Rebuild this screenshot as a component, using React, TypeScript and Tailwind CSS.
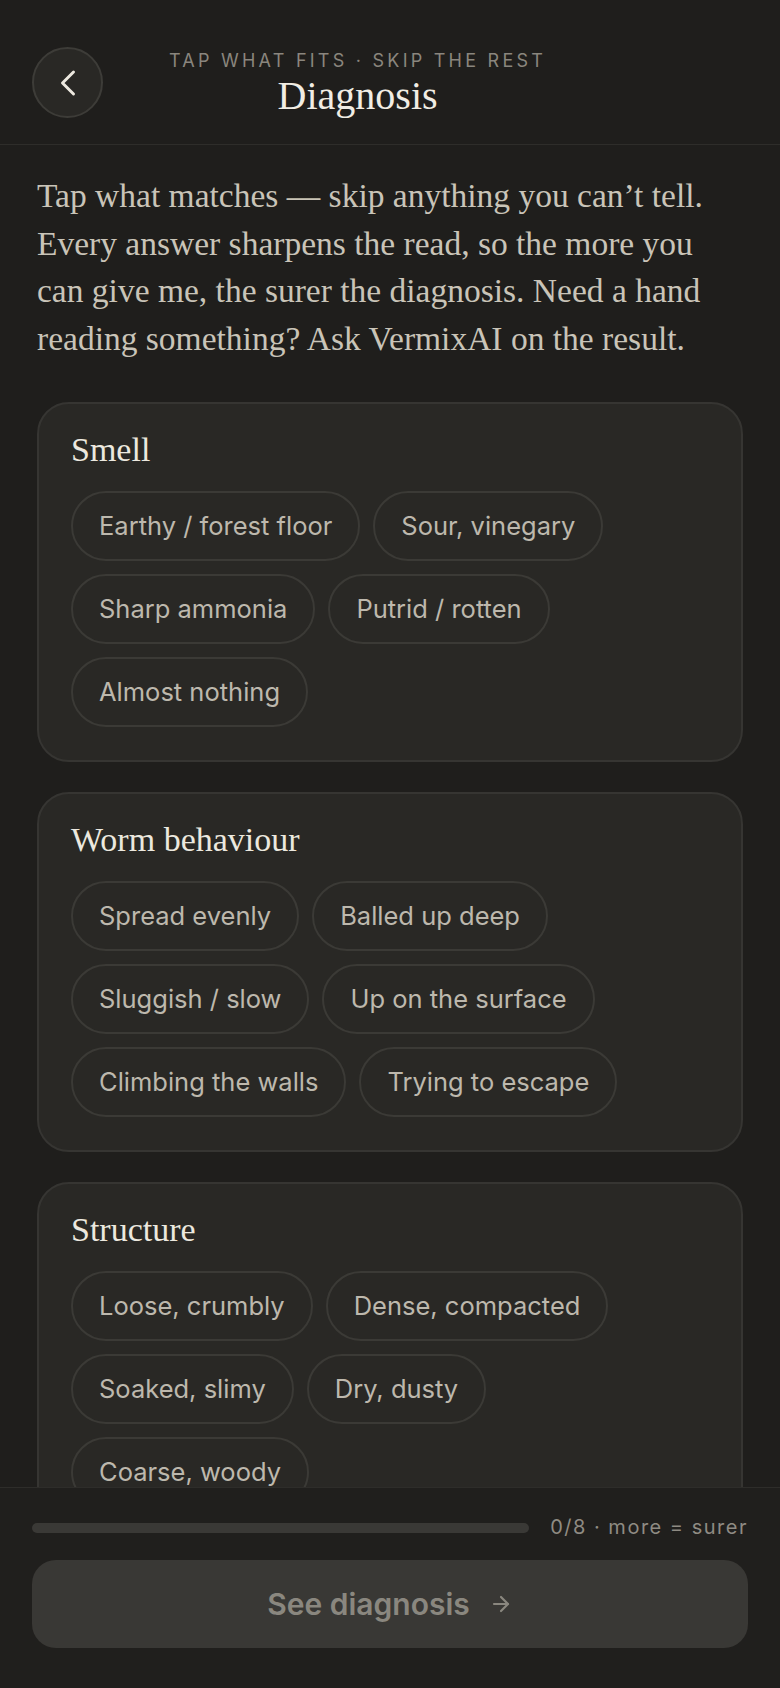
import { ChevronLeft, ArrowRight } from "lucide-react";

const serif = { fontFamily: '"Liberation Serif", "Times New Roman", serif' };
const sans = { fontFamily: 'Inter, "Noto Sans", sans-serif' };

const groups = [
  {
    title: "Smell",
    options: ["Earthy / forest floor", "Sour, vinegary", "Sharp ammonia", "Putrid / rotten", "Almost nothing"],
  },
  {
    title: "Worm behaviour",
    options: [
      "Spread evenly",
      "Balled up deep",
      "Sluggish / slow",
      "Up on the surface",
      "Climbing the walls",
      "Trying to escape",
    ],
  },
  {
    title: "Structure",
    options: ["Loose, crumbly", "Dense, compacted", "Soaked, slimy", "Dry, dusty", "Coarse, woody"],
  },
];

const intro = [
  "Tap what matches — skip anything you can’t tell.",
  "Every answer sharpens the read, so the more you",
  "can give me, the surer the diagnosis. Need a hand",
  "reading something? Ask VermixAI on the result.",
];

const App = () => {
  return (
    <div className="flex h-[1688px] w-full flex-col overflow-hidden bg-[#1f1e1c]" style={sans}>
      {/* Header */}
      <header className="flex h-[145px] shrink-0 items-center border-b border-[#2e2d2a] px-[32px] pt-[21px]">
        <button className="flex h-[71px] w-[71px] items-center justify-center rounded-full border-2 border-[#3d3c38] bg-[#292825] text-[#ece8df]">
          <ChevronLeft size={44} strokeWidth={1.6} />
        </button>
        <div className="ml-[66px] flex flex-col items-center">
          <div className="text-[18px] uppercase tracking-[0.18em] text-[#8a867e]">Tap what fits · Skip the rest</div>
          <h1 className="text-[40px] leading-[44px] text-[#f1ede4]" style={serif}>
            Diagnosis
          </h1>
        </div>
      </header>

      {/* Content */}
      <main className="flex-1 overflow-hidden px-[37px] pt-[27px]">
        <p className="text-[33.5px] leading-[47.5px] text-[#c9c4b8]" style={serif}>
          {intro.map((line) => (
            <span key={line} className="block whitespace-nowrap">
              {line}
            </span>
          ))}
        </p>

        <div className="mt-[40px] flex flex-col gap-[30px]">
          {groups.map((g) => (
            <section
              key={g.title}
              className="rounded-[32px] border-2 border-[#363532] bg-[#292825] px-[32px] pt-[26px] pb-[33px]"
            >
              <h2 className="text-[34px] leading-[40px] text-[#ece8df]" style={serif}>
                {g.title}
              </h2>
              <div className="mt-[21px] flex flex-wrap gap-[13px]">
                {g.options.map((o) => (
                  <button
                    key={o}
                    className="flex h-[70px] items-center rounded-full border-2 border-[#3b3a36] px-[26px] text-[25.5px] text-[#bdb8ad]"
                  >
                    {o}
                  </button>
                ))}
              </div>
            </section>
          ))}
        </div>
      </main>

      {/* Footer */}
      <footer className="shrink-0 border-t border-[#2e2d2a] bg-[#201f1d] px-[32px] pt-[26px] pb-[40px]">
        <div className="flex items-center gap-[21px]">
          <div className="h-[10px] flex-1 rounded-full bg-[#3a3936]" />
          <div className="text-[20px] leading-[27px] tracking-[1.5px] text-[#8f8b83]">0/8 · more = surer</div>
        </div>
        <button className="mt-[19px] flex h-[88px] w-full items-center justify-center gap-[19px] rounded-[24px] bg-[#393835] text-[30px] font-semibold text-[#8a877f]">
          See diagnosis
          <ArrowRight size={24} strokeWidth={2.2} />
        </button>
      </footer>
    </div>
  );
};

export default App;
